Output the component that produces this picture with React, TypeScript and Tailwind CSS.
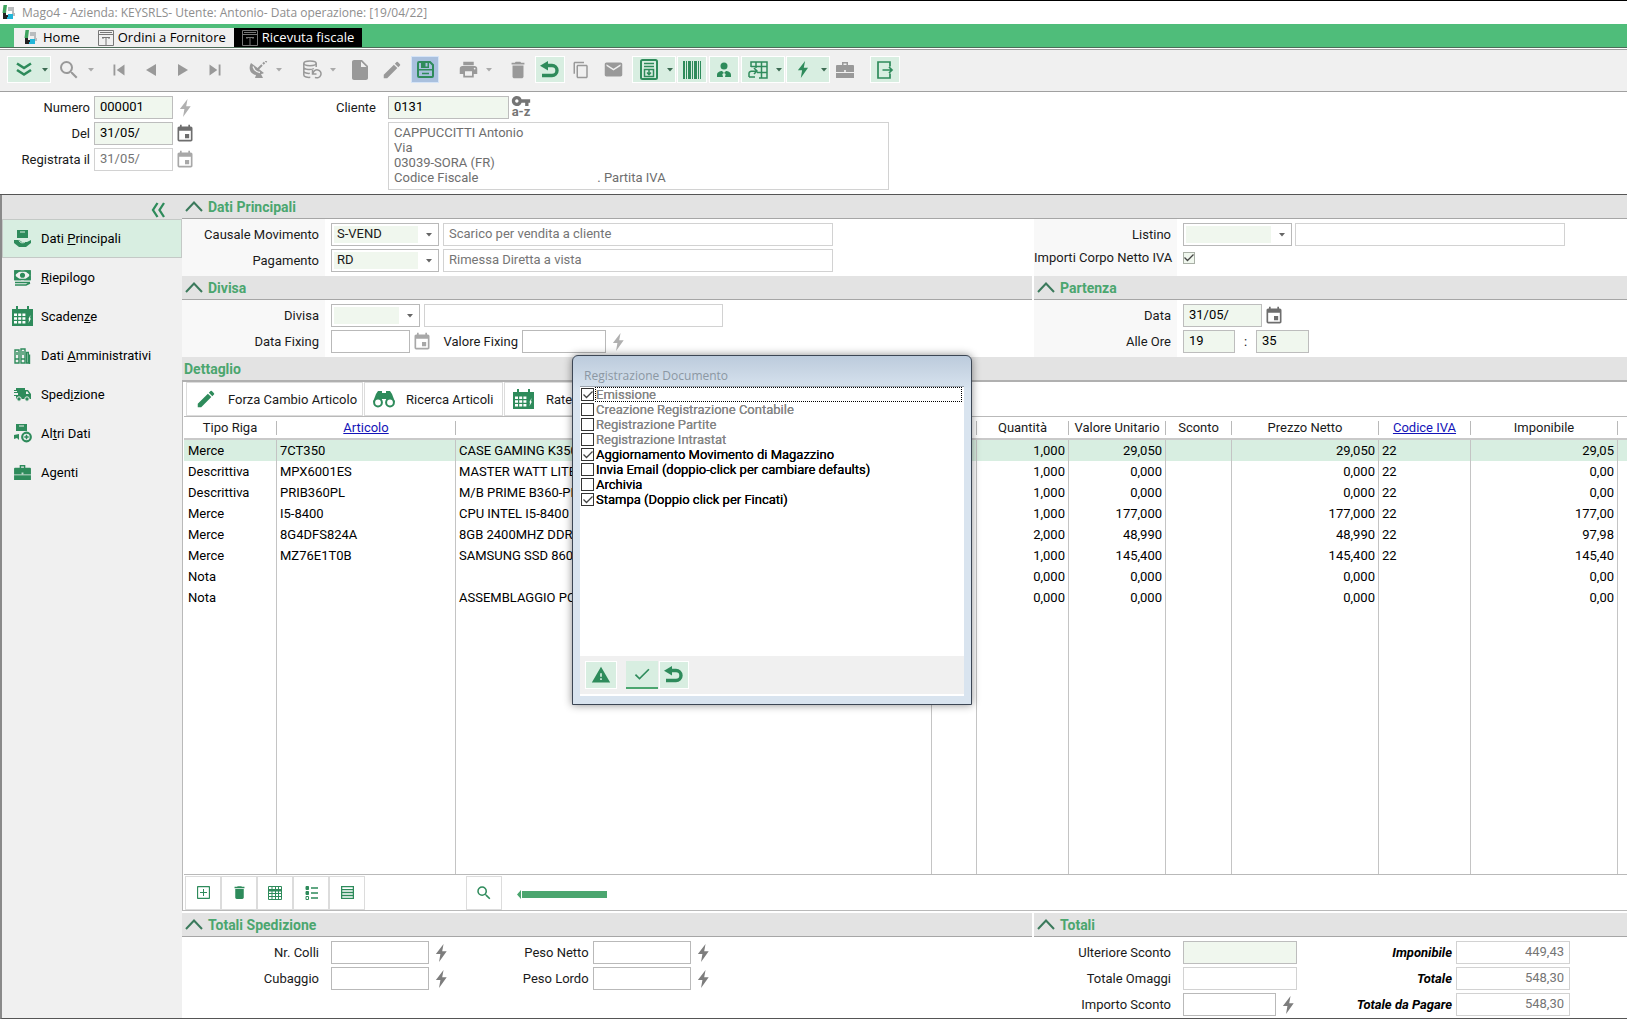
import React from 'react';
import {
  MdSearch, MdSkipPrevious, MdSkipNext, MdInsertDriveFile, MdEdit, MdPrint,
  MdDelete, MdContentCopy, MdEmail, MdEvent, MdVpnKey, MdWarning, MdCheck,
} from 'react-icons/md';

const Caret = ({ className = 'text-[#666]' }: { className?: string }) => (
  <svg width="6" height="4" viewBox="0 0 6 4" className={className}><path d="M0 0h6L3 3.5z" fill="currentColor" /></svg>
);

const Bolt = ({ className = 'text-[#7d7d7d]', size = 18 }: { className?: string; size?: number }) => (
  <svg width={size * 0.7} height={size} viewBox="0 0 14 20" className={`shrink-0 ${className}`}>
    <path d="M9.500 0 1 11h5L4.500 20l8.500-12H8z" fill="currentColor" />
  </svg>
);

const Undo = () => (
  <svg width="20" height="18" viewBox="0 0 20 18">
    <path d="M5 4.5h7a5 5 0 0 1 0 10H2" fill="none" stroke="currentColor" strokeWidth="3.4" />
    <path d="M8 0v9.5L0 4.7z" fill="currentColor" />
  </svg>
);

const DoubleDown = () => (
  <svg width="16" height="15" viewBox="0 0 16 15" fill="none" stroke="currentColor" strokeWidth="2.600">
    <path d="m1 1.500 7 4.500 7-4.500M1 8l7 4.500L15 8" />
  </svg>
);

const DoubleLeft = () => (
  <svg width="14" height="16" viewBox="0 0 14 16" fill="none" stroke="currentColor" strokeWidth="2.300">
    <path d="M6.500 1 2 8l4.500 7M13 1 8.500 8l4.500 7" />
  </svg>
);

const Save = () => (
  <svg width="17" height="17" viewBox="0 0 17 17">
    <path d="M2 1h11l3 3v11a1 1 0 0 1-1 1H2a1 1 0 0 1-1-1V2a1 1 0 0 1 1-1z" fill="#a9c0de" stroke="currentColor" strokeWidth="2" />
    <path d="M4 1h8v6H4zM1 8h15v1.500H1z" fill="currentColor" />
    <path d="M8.500 2h2v3.500h-2z" fill="#a9c0de" />
    <path d="M5 12.500h7" stroke="currentColor" strokeWidth="1.500" />
  </svg>
);

const Dish = () => (
  <svg width="19" height="18" viewBox="0 0 19 18">
    <path d="M2 2c-3 5-1 11 5 12l-1 3h8l-2-4c1 0 2-.5 3-1z" fill="currentColor" />
    <path d="M4 5.500C5 9 7 11 11 11.500" fill="none" stroke="#f0f0f0" strokeWidth="1.300" />
    <path d="m8 9 5-5M14 3l1.500-1.500M16.500 1l1-1" stroke="currentColor" strokeWidth="2" />
  </svg>
);

const Database = () => (
  <svg width="20" height="19" viewBox="0 0 20 19" fill="none" stroke="currentColor" strokeWidth="1.500">
    <ellipse cx="8" cy="3.300" rx="6.200" ry="2.400" />
    <path d="M1.800 3.300V7c0 3 8 3 10 1.500M14.200 3.300V7M1.800 7v4c0 2 4 2.600 6 2.300M1.800 11v4c0 2 4 2.600 6.500 2.300" />
    <path d="M10.500 10v4h4M11 13.500a4 4 0 1 1 2 3.800" />
  </svg>
);

const DocDown = () => (
  <svg width="18" height="21" viewBox="0 0 18 21" fill="none" stroke="currentColor" strokeWidth="2">
    <rect x="1" y="1" width="16" height="19" rx="1.500" />
    <path d="M4 4.500h10M4 7.500h10" strokeWidth="1.500" />
    <rect x="4.500" y="10.500" width="9" height="7" strokeWidth="1.500" />
    <path d="M9 11v3.500M7 13.500l2 2.200 2-2.200" strokeWidth="1.500" />
  </svg>
);

const Barcode = () => (
  <svg width="18" height="18" viewBox="0 0 18 18" fill="currentColor">
    <path d="M0 0h2v18H0zM3 0h1v18H3zM5 0h3v18H5zM9 0h1v18H9zM11 0h3v18h-3zM15 0h1v18h-1zM17 0h1v18h-1z" />
  </svg>
);

const Person = () => (
  <svg width="16" height="16" viewBox="0 0 16 16" fill="currentColor">
    <circle cx="8" cy="4" r="3.500" />
    <path d="M1 15v-2c0-3 3-4 5-4l2 2 2-2c2 0 5 1 5 4v2H9l.7-3L8 11l-1.700 1 .7 3z" />
  </svg>
);

const GridFlow = () => (
  <svg width="20" height="18" viewBox="0 0 20 18" fill="none" stroke="currentColor" strokeWidth="1.500">
    <path d="M3 6V1h16v16h-8M3 5.500h16M8 1v6M13.500 1v16M9 11.500h10" />
    <path d="M1 16v-4c0-2 3-2 7-2M6 7l3 3-3 3M1 16h6" />
  </svg>
);

const Briefcase = ({ size = 18 }: { size?: number }) => (
  <svg width={size} height={size - 2} viewBox="0 0 18 16" fill="currentColor">
    <path d="M6 3V0h6v3h5a1 1 0 0 1 1 1v6H0V4a1 1 0 0 1 1-1zM7.500 3h3V1.500h-3zM0 11h18v5H0z" fillRule="evenodd" />
    <path d="M8 8h2v2H8z" fill="#fff" opacity=".7" />
  </svg>
);

const Exit = () => (
  <svg width="18" height="18" viewBox="0 0 18 18" fill="none" stroke="currentColor" strokeWidth="1.700">
    <path d="M14 5.500V1H2v16h12v-4.500M6.500 9H16M13 6l3 3-3 3" />
  </svg>
);

const Schedule = ({ size = 21 }: { size?: number }) => (
  <svg width={size} height={size} viewBox="0 0 21 21">
    <path d="M0 3h4V0h2v3h9V0h2v3h4v17H0z" fill="currentColor" />
    <path d="M2 7.500h3V10H2zM6.200 7.500h3V10h-3zM10.400 7.500h3V10h-3zM2 11.200h3v2.500H2zM6.200 11.200h3v2.500h-3zM10.400 11.200h3v2.500h-3zM2 15h3v2.500H2zM6.200 15h3v2.500h-3zM10.400 15h3v2.500h-3zM16.500 13l2-4-.5 3.500h1L16.500 17l.5-3z" fill="#fff" />
  </svg>
);

const Binoculars = () => (
  <svg width="22" height="17" viewBox="0 0 22 17">
    <path d="M3 3 5 0h4v2h4V0h4l2 3 3 8h-8l-1-3h-4l-1 3H0z" fill="currentColor" />
    <circle cx="5" cy="11.500" r="3.900" fill="#fff" stroke="currentColor" strokeWidth="2" />
    <circle cx="17" cy="11.500" r="3.900" fill="#fff" stroke="currentColor" strokeWidth="2" />
  </svg>
);

const BoxHand = () => (
  <svg width="17" height="18" viewBox="0 0 17 18" fill="currentColor">
    <path d="M3 0h11v8H3zM0 10h5l3 2h5l4-2v3l-5 4H5l-5-4z" />
    <path d="M6 1.500h5v1H6z" fill="#d8eee1" />
    <path d="M5 10.500c1 2.500 4 3 6 1.500" fill="none" stroke="#d8eee1" />
  </svg>
);

const BoxPlus = () => (
  <svg width="19" height="19" viewBox="0 0 19 19">
    <path d="M3 0h11v7H3zM1 11l5-1v6l-2-2-3 1z" fill="currentColor" />
    <path d="M6 1.500h5v1H6z" fill="#f0f0f0" />
    <circle cx="13.500" cy="13" r="4.300" fill="#f0f0f0" stroke="currentColor" strokeWidth="2.200" />
    <path d="M13.500 10.800v4.400M11.300 13h4.400" stroke="currentColor" strokeWidth="1.500" />
  </svg>
);

const Money = () => (
  <svg width="17" height="16" viewBox="0 0 17 16" fill="none" stroke="currentColor" strokeWidth="1.500">
    <rect x="1" y="1" width="15" height="8.500" />
    <path d="M1 1h4L1 4zM16 1h-4l4 3zM1 9.500h4l-4-3zM16 9.500h-4l4-3z" fill="currentColor" />
    <circle cx="8.500" cy="5.200" r="1.800" fill="currentColor" />
    <path d="M1 12.500h15M1 15h11l4-2" />
  </svg>
);

const Binders = () => (
  <svg width="17" height="16" viewBox="0 0 17 16" fill="none" stroke="currentColor" strokeWidth="1.400">
    <path d="M1 2h4v13H1zM7 1h4v14H7zM1 11h4M7 11h4M3 4v3M9 3v4" />
    <path d="M12.500 4.500h1.800V15h-1.800zM15.500 6.500V16" />
  </svg>
);

const Truck = () => (
  <svg width="17" height="15" viewBox="0 0 17 15" fill="currentColor">
    <path d="M2 1h9v2h3l3 4v5H2V9H0V8h4V6H0V5h3V4H0V3h2z" />
    <path d="M12 4.500h1.500L15 7h-3z" fill="#f0f0f0" />
    <circle cx="5" cy="12" r="2.200" stroke="#f0f0f0" />
    <circle cx="13" cy="12" r="2.200" stroke="#f0f0f0" />
  </svg>
);

const Logo = () => (
  <svg width="13" height="15" viewBox="0 0 13 15">
    <path d="M1.500 0H5L4 8H.5z" fill="#3da35d" />
    <path d="M6 2h6v6h1v3h-3V6H6z" fill="#b9bcbe" />
    <path d="M1 8h3v2h3v4H1z" fill="#222" />
    <path d="M6 9h5v5H5v-2h1z" fill="#22b5d8" />
  </svg>
);

const FormIcon = ({ className }: { className: string }) => (
  <svg width="16" height="16" viewBox="0 0 16 16" fill="none" stroke="currentColor" className={className}>
    <path d="M.5.500h15v15H.5zM.5 4.500h15M2 2.500h12M4 7.500h8M8 7.500V15M5 9v-1.500M11 9v-1.500" />
  </svg>
);

const Collapse = () => (
  <svg width="18" height="11" viewBox="0 0 18 11" className="text-[#3b7a5c]">
    <path d="M1 10 9 1.500 17 10" fill="none" stroke="currentColor" strokeWidth="2" />
  </svg>
);

const NavTriangle = ({ flip = false }: { flip?: boolean }) => (
  <svg width="10" height="12" viewBox="0 0 10 12" fill="currentColor">
    <path d={flip ? 'M0 0v12l10-6z' : 'M10 0v12L0 6z'} />
  </svg>
);

const toolbar = [
  { name: 'Espandi', icon: <DoubleDown />, box: 'w-[44px]', on: true, caret: true },
  { name: 'Cerca', icon: <MdSearch size={24} />, box: 'w-[46px]', caret: true },
  { name: 'Primo', icon: <MdSkipPrevious size={22} />, box: 'w-8 ml-1.5' },
  { name: 'Precedente', icon: <NavTriangle />, box: 'w-8' },
  { name: 'Successivo', icon: <NavTriangle flip />, box: 'w-8' },
  { name: 'Ultimo', icon: <MdSkipNext size={22} />, box: 'w-8' },
  { name: 'Radar', icon: <Dish />, box: 'w-[44px] ml-2.5', caret: true },
  { name: 'Query', icon: <Database />, box: 'w-[44px] ml-2.5', caret: true },
  { name: 'Nuovo', icon: <MdInsertDriveFile size={24} />, box: 'w-[30px] ml-1.5' },
  { name: 'Modifica', icon: <MdEdit size={22} />, box: 'w-[30px] ml-0.5' },
  { name: 'Salva', icon: <Save />, box: 'w-7 ml-1', save: true },
  { name: 'Stampa', icon: <MdPrint size={21} />, box: 'w-[44px] ml-3', caret: true },
  { name: 'Elimina', icon: <MdDelete size={22} />, box: 'w-[30px] ml-2' },
  { name: 'Annulla', icon: <Undo />, box: 'w-[30px] ml-0.5', on: true },
  { name: 'Copia', icon: <MdContentCopy size={18} />, box: 'w-[30px] ml-px' },
  { name: 'Email', icon: <MdEmail size={21} />, box: 'w-[30px] ml-0.5' },
  { name: 'Scarica', icon: <DocDown />, box: 'w-[44px] ml-1', on: true, caret: true },
  { name: 'Codice a barre', icon: <Barcode />, box: 'w-[30px] ml-px', on: true },
  { name: 'Cliente', icon: <Person />, box: 'w-[30px] ml-0.5', on: true },
  { name: 'Griglia', icon: <GridFlow />, box: 'w-[44px] ml-0.5', on: true, caret: true },
  { name: 'Azioni', icon: <Bolt className="" size={17} />, box: 'w-[44px] ml-px', on: true, caret: true },
  { name: 'Agente', icon: <Briefcase />, box: 'w-[30px]' },
  { name: 'Esci', icon: <Exit />, box: 'w-[30px] ml-2.5', on: true },
];

const sideItems = [
  { label: <>Dati <u>P</u>rincipali</>, icon: <BoxHand />, active: true },
  { label: <><u>R</u>iepilogo</>, icon: <Money /> },
  { label: <>Scaden<u>z</u>e</>, icon: <Schedule /> },
  { label: <>Dati <u>A</u>mministrativi</>, icon: <Binders /> },
  { label: <>Sped<u>i</u>zione</>, icon: <Truck /> },
  { label: <>Al<u>t</u>ri Dati</>, icon: <BoxPlus /> },
  { label: <>A<u>g</u>enti</>, icon: <Briefcase size={17} /> },
];

const rows = [
  ['Merce', '7CT350', 'CASE GAMING K350', '', '1,000', '29,050', '', '29,050', '22', '29,05'],
  ['Descrittiva', 'MPX6001ES', 'MASTER WATT LITE', '', '1,000', '0,000', '', '0,000', '22', '0,00'],
  ['Descrittiva', 'PRIB360PL', 'M/B PRIME B360-PLUS', '', '1,000', '0,000', '', '0,000', '22', '0,00'],
  ['Merce', 'I5-8400', 'CPU INTEL I5-8400 2', '', '1,000', '177,000', '', '177,000', '22', '177,00'],
  ['Merce', '8G4DFS824A', '8GB 2400MHZ DDR4', '', '2,000', '48,990', '', '48,990', '22', '97,98'],
  ['Merce', 'MZ76E1T0B', 'SAMSUNG SSD 860', '', '1,000', '145,400', '', '145,400', '22', '145,40'],
  ['Nota', '', '', '', '0,000', '0,000', '', '0,000', '', '0,00'],
  ['Nota', '', 'ASSEMBLAGGIO PC', '', '0,000', '0,000', '', '0,000', '', '0,00'],
];

const headers = ['Tipo Riga', 'Articolo', '', '', 'Quantità', 'Valore Unitario', 'Sconto', 'Prezzo Netto', 'Codice IVA', 'Imponibile'];
const colWidths = ['w-[93px]', 'w-[179px]', '', 'w-[45px]', 'w-[92px]', 'w-[97px]', 'w-[66px]', 'w-[147px]', 'w-[92px]', 'w-[147px]', 'w-[9px]'];

const options = [
  { label: 'Emissione', checked: true, off: true, focus: true },
  { label: 'Creazione Registrazione Contabile', off: true },
  { label: 'Registrazione Partite', off: true },
  { label: 'Registrazione Intrastat', off: true },
  { label: 'Aggiornamento Movimento di Magazzino', checked: true },
  { label: 'Invia Email (doppio-click per cambiare defaults)' },
  { label: 'Archivia' },
  { label: 'Stampa (Doppio click per Fincati)', checked: true },
];

type BoxProps = { id: string; value?: string; kind?: 'edit' | 'plain' | 'read'; className: string; label?: string };

const boxKinds = {
  edit: 'bg-[#f0f7ee] border-[#bdbdbd] text-black',
  plain: 'bg-white border-[#b9b9b9] text-black',
  read: 'bg-white border-[#d2d2d2] text-[#757575]',
};

const Box = ({ id, value = '', kind = 'edit', className, label }: BoxProps) => (
  <input
    id={id}
    aria-label={label}
    defaultValue={value}
    readOnly={kind === 'read'}
    className={`h-[23px] border px-[5px] pb-0.5 outline-none ${boxKinds[kind]} ${className}`}
  />
);

const Combo = ({ id, value = '', className }: { id: string; value?: string; className: string }) => (
  <span className={`flex h-[23px] items-center border border-[#b9b9b9] bg-white p-0.5 ${className}`}>
    <select id={id} defaultValue={value} className="h-full min-w-0 flex-1 appearance-none bg-[#f0f7ee] pb-0.5 pl-[3px] outline-none">
      <option value={value}>{value}</option>
    </select>
    <span className="flex w-[18px] justify-end pr-1"><Caret /></span>
  </span>
);

const Label = ({ id, children, className = '' }: { id: string; children: React.ReactNode; className?: string }) => (
  <label htmlFor={id} className={`shrink-0 whitespace-nowrap text-right ${className}`}>{children}</label>
);

const SectionHead = ({ title }: { title: string }) => (
  <div className="flex h-6 items-center gap-[5px] border-b border-[#a6a6a6] bg-[#e3e3e3] pl-[3px]">
    <Collapse />
    <h2 className="text-sm font-bold leading-4 text-[#4ba66f]">{title}</h2>
  </div>
);

const Row = ({ children }: { children: React.ReactNode }) => <div className="flex h-[23px] items-center">{children}</div>;

const Check = ({ id, checked = false, off = false, box }: { id: string; checked?: boolean; off?: boolean; box: string }) => (
  <span className="grid shrink-0 place-items-center">
    <input
      id={id}
      type="checkbox"
      defaultChecked={checked}
      disabled={off}
      className={`peer col-start-1 row-start-1 appearance-none border ${box}`}
    />
    <svg viewBox="0 0 10 8" className="pointer-events-none col-start-1 row-start-1 hidden h-2 w-2.5 peer-checked:block">
      <path d="M.5 3.500 3.500 6.500 9.500.5" fill="none" stroke="#444" strokeWidth="1.300" />
    </svg>
  </span>
);

const GridTool = ({ name, children, className = '' }: { name: string; children: React.ReactNode; className?: string }) => (
  <button aria-label={name} className={`flex h-[34px] w-9 items-center justify-center border border-[#dcdcdc] text-[#2e8b5b] ${className}`}>
    {children}
  </button>
);

const SaveDialog = () => (
  <div
    role="dialog"
    aria-labelledby="dlg-title"
    className="absolute left-[572px] top-[354px] flex h-[350px] w-[400px] flex-col rounded-t-md border border-[#3c4654] bg-[#d9e4ef] bg-gradient-to-b from-[#bccbdc] to-[#d9e4ef] to-10% px-[7px] pb-2 shadow-[0_0_9px_rgba(0,0,0,0.45)]"
  >
    <h2 id="dlg-title" className="h-[30px] pl-1 pt-3 font-['Open_Sans',sans-serif] text-xs leading-4 text-[#8b97a3]">
      Registrazione Documento
    </h2>
    <ul className="flex-1 border-t border-[#9aa3ad] bg-white">
      {options.map((o, i) => (
        <li key={i} className="flex h-[15px] items-center gap-px pl-px">
          <Check id={`opt${i}`} checked={o.checked} off={o.off} box="h-[13px] w-[13px] border-[#333] bg-white" />
          <label
            htmlFor={`opt${i}`}
            className={`mr-0.5 flex-1 border border-dotted leading-[13px] [text-shadow:0_0_0_currentColor] ${o.off ? 'text-[#858585]' : 'text-black'} ${o.focus ? 'border-black' : 'border-transparent'}`}
          >
            {o.label}
          </label>
        </li>
      ))}
    </ul>
    <div className="flex h-10 items-center border-b-2 border-white bg-[#f0f0f0] pl-[5px] text-[#2e8b5b]">
      <button aria-label="Avvisi" className="flex h-7 w-8 items-center justify-center border border-white bg-[#d8eee1]"><MdWarning size={20} /></button>
      <button aria-label="Conferma" className="ml-[9px] flex h-7 w-8 items-center justify-center border-b-2 border-[#4ba66f] bg-[#d8eee1]"><MdCheck size={20} stroke="currentColor" /></button>
      <button aria-label="Annulla" className="ml-px flex h-7 w-[30px] items-center justify-center border border-white bg-[#d8eee1]"><Undo /></button>
    </div>
  </div>
);

const App = () => (
  <div className="relative flex min-h-screen flex-col border-t border-black bg-white pb-px font-[Roboto,sans-serif] text-[13px] leading-[15px] text-[#1a1a1a]">
    {/* Title bar */}
    <header className="flex h-[23px] items-center gap-[7px] pl-0.5">
      <Logo />
      <h1 className="font-['Open_Sans',sans-serif] text-xs text-[#8e8e8e]">
        Mago4 - Azienda: KEYSRLS- Utente: Antonio- Data operazione: [19/04/22]
      </h1>
    </header>

    {/* Document tabs */}
    <nav className="flex h-6 items-end border-b border-[#4c6b58] bg-[#4fbd7a] pl-3.5 font-['Open_Sans',sans-serif] text-[13px] text-black">
      <button className="flex h-[19px] items-center gap-1.5 bg-[#f0f0f0] px-2.5"><Logo />Home</button>
      <button className="flex h-[19px] items-center gap-1 bg-[#f0f0f0] px-2"><FormIcon className="text-[#777]" />Ordini a Fornitore</button>
      <button className="flex h-[19px] items-center gap-1 bg-black px-2 text-white"><FormIcon className="text-[#777]" />Ricevuta fiscale</button>
    </nav>

    {/* Toolbar */}
    <div className="mt-px flex h-[43px] items-center border-y border-[#a0a0a0] bg-[#f0f0f0] pb-0.5 pl-[7px]">
      {toolbar.map((t) => (
        <button
          key={t.name}
          aria-label={t.name}
          className={`flex h-[27px] shrink-0 items-center border ${t.box} ${
            t.save ? 'border-[#d5e4f7] bg-[#a9c0de] text-[#2e8b5b]'
              : t.on ? 'border-white bg-[#d8eee1] text-[#2e8b5b]'
              : 'border-transparent text-[#999]'
          }`}
        >
          <span className="flex flex-1 justify-center">{t.icon}</span>
          {t.caret && <span className="flex w-2.5 justify-center"><Caret className={t.on ? 'text-[#3b6b52]' : 'text-[#aaa]'} /></span>}
        </button>
      ))}
    </div>

    {/* Document header */}
    <div className="flex gap-[115px] border-b border-[#555] pb-1 pt-1">
      <div className="flex flex-col gap-[3px]">
        <Row>
          <Label id="numero" className="w-[90px]">Numero</Label>
          <Box id="numero" value="000001" className="ml-1 w-[79px]" />
          <Bolt className="ml-1.5 text-[#b0b0b0]" />
        </Row>
        <Row>
          <Label id="del" className="w-[90px]">Del</Label>
          <Box id="del" value="31/05/" className="ml-1 w-[79px]" />
          <MdEvent size={20} className="ml-0.5 text-[#6e6e6e]" />
        </Row>
        <Row>
          <Label id="registrata" className="w-[90px]">Registrata il</Label>
          <Box id="registrata" value="31/05/" kind="read" className="ml-1 w-[79px]" />
          <MdEvent size={20} className="ml-0.5 text-[#a8a8a8]" />
        </Row>
      </div>
      <div className="flex flex-col gap-[3px] pl-1.5">
        <Row>
          <Label id="cliente" className="w-[60px]">Cliente</Label>
          <Box id="cliente" value="0131" className="ml-3 w-[121px]" />
          <button aria-label="Ricerca per chiave" className="ml-0.5 flex flex-col items-center pb-1 text-[13px] font-bold leading-[9px] text-[#757575]">
            <MdVpnKey size={20} className="-my-1" />a-z
          </button>
        </Row>
        <div className="ml-[72px] h-[68px] w-[501px] border border-[#d2d2d2] px-[5px] pt-0.5 text-[#6e6e6e]">
          <p>CAPPUCCITTI Antonio</p>
          <p>Via</p>
          <p>03039-SORA (FR)</p>
          <p className="flex gap-[119px]"><span>Codice Fiscale</span><span>. Partita IVA</span></p>
        </div>
      </div>
    </div>

    <div className="flex flex-1 border-b border-l-2 border-b-[#555] border-l-[#8a8a8a]">
      {/* Side menu */}
      <aside className="w-[180px] shrink-0 bg-[#f0f0f0]">
        <div className="flex h-6 items-center justify-end bg-[#e3e3e3] pr-[17px] pt-1.5 text-[#2e8b5b]">
          <button aria-label="Comprimi menu"><DoubleLeft /></button>
        </div>
        {sideItems.map((s, i) => (
          <button
            key={i}
            className={`flex h-[39px] w-full items-center border pl-[7px] text-black ${s.active ? 'border-[#c4c9c6] bg-[#d8eee1]' : 'border-transparent'}`}
          >
            <span className="flex w-6 justify-center text-[#2e8b5b]">{s.icon}</span>
            <span className="ml-[7px]">{s.label}</span>
          </button>
        ))}
      </aside>

      <main className="flex min-w-0 flex-1 flex-col">
        <SectionHead title="Dati Principali" />
        <div className="grid h-[57px] grid-cols-[850fr_593fr] gap-0.5">
          <div className="flex flex-col gap-[3px] bg-[linear-gradient(90deg,#f8f8f8_143px,#fff_143px)] pt-1">
            <Row>
              <Label id="causale" className="w-[137px]">Causale Movimento</Label>
              <Combo id="causale" value="S-VEND" className="ml-3 w-[108px]" />
              <Box id="causale-d" label="Descrizione causale" value="Scarico per vendita a cliente" kind="read" className="ml-1 w-[390px]" />
            </Row>
            <Row>
              <Label id="pagamento" className="w-[137px]">Pagamento</Label>
              <Combo id="pagamento" value="RD" className="ml-3 w-[108px]" />
              <Box id="pagamento-d" label="Descrizione pagamento" value="Rimessa Diretta a vista" kind="read" className="ml-1 w-[390px]" />
            </Row>
          </div>
          <div className="flex flex-col bg-[linear-gradient(90deg,#f8f8f8_143px,#fff_143px)] pt-1">
            <Row>
              <Label id="listino" className="w-[137px]">Listino</Label>
              <Combo id="listino" className="ml-3 w-[109px]" />
              <Box id="listino-d" label="Descrizione listino" kind="read" className="ml-[3px] w-[270px]" />
            </Row>
            <Row>
              <Label id="netto" className="w-[137px]">Importi Corpo Netto IVA</Label>
              <span className="ml-3"><Check id="netto" checked box="h-3 w-3 border-[#a9b0a6] bg-[#f0f7ee]" /></span>
            </Row>
          </div>
        </div>

        <div className="grid grid-cols-[850fr_593fr] gap-0.5">
          <section>
            <SectionHead title="Divisa" />
            <div className="flex h-[57px] flex-col gap-[3px] bg-[linear-gradient(90deg,#f8f8f8_143px,#fff_143px)] pt-1">
              <Row>
                <Label id="divisa" className="w-[137px]">Divisa</Label>
                <Combo id="divisa" className="ml-3 w-[89px]" />
                <Box id="divisa-d" label="Descrizione divisa" kind="read" className="ml-1 w-[299px]" />
              </Row>
              <Row>
                <Label id="fixing" className="w-[137px]">Data Fixing</Label>
                <Box id="fixing" kind="plain" className="ml-3 w-[79px]" />
                <MdEvent size={20} className="ml-0.5 text-[#a8a8a8]" />
                <Label id="valfixing" className="w-[86px]">Valore Fixing</Label>
                <Box id="valfixing" kind="plain" className="ml-1 w-[84px]" />
                <Bolt className="ml-1.5 text-[#b0b0b0]" />
              </Row>
            </div>
          </section>
          <section>
            <SectionHead title="Partenza" />
            <div className="flex h-[57px] flex-col gap-[3px] bg-[linear-gradient(90deg,#f8f8f8_143px,#fff_143px)] pt-1">
              <Row>
                <Label id="data" className="w-[137px]">Data</Label>
                <Box id="data" value="31/05/" className="ml-3 w-[79px]" />
                <MdEvent size={20} className="ml-0.5 text-[#6e6e6e]" />
              </Row>
              <Row>
                <Label id="ore" className="w-[137px]">Alle Ore</Label>
                <Box id="ore" value="19" className="ml-3 w-[52px]" />
                <span className="w-[21px] text-center">:</span>
                <Box id="minuti" label="Minuti" value="35" className="w-[53px]" />
              </Row>
            </div>
          </section>
        </div>

        {/* Document lines */}
        <h2 className="h-[25px] border-b-2 border-[#b0b0b0] bg-[#e3e3e3] pl-0.5 pt-1 text-sm font-bold leading-4 text-[#4ba66f]">Dettaglio</h2>
        <div className="flex flex-1 flex-col border-b border-l border-[#b9b9b9] pl-px">
          <div className="flex h-[35px] items-end gap-px border-b border-[#b9b9b9] pl-0.5">
            <button className="flex h-[34px] w-[177px] items-center border border-[#dcdcdc] pl-2"><MdEdit size={22} className="text-[#2e8b5b]" /><span className="ml-[11px]">Forza Cambio Articolo</span></button>
            <button className="flex h-[34px] w-[139px] items-center border border-[#dcdcdc] pl-2"><span className="text-[#2e8b5b]"><Binoculars /></span><span className="ml-[11px]">Ricerca Articoli</span></button>
            <button className="flex h-[34px] w-[139px] items-center border border-[#dcdcdc] pl-2"><span className="text-[#2e8b5b]"><Schedule /></span><span className="ml-3">Rate</span></button>
          </div>
          <table className="w-full table-fixed border-separate border-spacing-0">
            <colgroup>{colWidths.map((w, i) => <col key={i} className={w} />)}</colgroup>
            <thead>
              <tr className="h-[23px]">
                {headers.map((h, i) => (
                  <th key={i} className="border-b-2 border-[#c9c9c9] p-0 font-normal">
                    <div className="h-3.5 border-r border-[#b9b9b9] leading-[14px]">
                      {i === 1 || i === 8 ? <a href="#" className="text-[#1414b8] underline">{h}</a> : h}
                    </div>
                  </th>
                ))}
                <th className="border-b-2 border-[#c9c9c9]" />
              </tr>
            </thead>
            <tbody>
              {rows.map((r, i) => (
                <tr key={i} className={`h-[21px] text-black ${i === 0 ? 'bg-[#d8eee1]' : ''}`}>
                  {r.map((c, j) => (
                    <td key={j} className={`overflow-hidden whitespace-nowrap border-r border-[#c4c4c4] py-0 ${j > 3 && j !== 8 ? 'px-[3px] text-right' : j === 0 ? 'px-1' : 'px-[3px]'}`}>{c}</td>
                  ))}
                  <td />
                </tr>
              ))}
            </tbody>
          </table>
          <div className="flex flex-1 border-b border-[#b9b9b9]">
            {colWidths.map((w, i) => (
              <div key={i} className={`${w || 'flex-1'} ${i < 10 ? 'border-r border-[#c4c4c4]' : ''}`} />
            ))}
          </div>
          <div className="flex h-[35px] items-center pl-px">
            <GridTool name="Aggiungi riga">
              <svg width="13" height="13" viewBox="0 0 13 13" fill="none" stroke="currentColor"><rect x=".5" y=".5" width="12" height="12" rx="1" strokeWidth="1.300" /><path d="M6.500 3v7M3 6.500h7" /></svg>
            </GridTool>
            <GridTool name="Elimina riga"><MdDelete size={17} /></GridTool>
            <GridTool name="Tabella">
              <svg width="14" height="14" viewBox="0 0 14 14" fill="none" stroke="currentColor"><path d="M.5.500h13v13H.5zM.5 7.500h13M.5 10.500h13M4 1v12M7.500 1v12M10.500 1v12" /><path d="M0 3h14v2.500H0z" fill="currentColor" stroke="none" /></svg>
            </GridTool>
            <GridTool name="Elenco">
              <svg width="13" height="14" viewBox="0 0 13 14" fill="none" stroke="currentColor"><path d="M6 2h7M6 7h7M6 12h7" strokeWidth="1.300" /><path d="M1 .5h2.500v3H1zM1 5.500h2.500v3H1z" fill="currentColor" /><path d="M1 10.500h2.500v3H1z" /></svg>
            </GridTool>
            <GridTool name="Righe">
              <svg width="13" height="13" viewBox="0 0 13 13" fill="none" stroke="currentColor" strokeWidth="1.300"><path d="M.6.600h11.800v11.800H.6zM.6 3.600h12M.6 6.500h12M.6 9.500h12" /></svg>
            </GridTool>
            <GridTool name="Cerca" className="ml-[101px]"><MdSearch size={18} /></GridTool>
            <svg width="90" height="9" viewBox="0 0 90 9" className="ml-[15px] mt-1 text-[#4ba66f]"><path d="M4 0v9L0 4.500zM5 1h85v7H5z" fill="currentColor" /></svg>
          </div>
        </div>

        {/* Totals */}
        <div className="mt-0.5 grid grid-cols-[850fr_593fr] gap-0.5">
          <section>
            <SectionHead title="Totali Spedizione" />
            <div className="flex flex-col gap-[3px] pt-1">
              <Row>
                <Label id="colli" className="w-[137px]">Nr. Colli</Label>
                <Box id="colli" kind="plain" className="ml-3 w-[98px]" />
                <Bolt className="ml-1.5 text-[#7d7d7d]" />
                <Label id="pnetto" className="w-[141px]">Peso Netto</Label>
                <Box id="pnetto" kind="plain" className="ml-1 w-[98px]" />
                <Bolt className="ml-1.5 text-[#7d7d7d]" />
              </Row>
              <Row>
                <Label id="cubaggio" className="w-[137px]">Cubaggio</Label>
                <Box id="cubaggio" kind="plain" className="ml-3 w-[98px]" />
                <Bolt className="ml-1.5 text-[#7d7d7d]" />
                <Label id="plordo" className="w-[141px]">Peso Lordo</Label>
                <Box id="plordo" kind="plain" className="ml-1 w-[98px]" />
                <Bolt className="ml-1.5 text-[#7d7d7d]" />
              </Row>
            </div>
          </section>
          <section>
            <SectionHead title="Totali" />
            <div className="flex gap-[3px] pb-0.5 pt-1">
              <div className="flex w-[267px] flex-col gap-[3px]">
                <Row>
                  <Label id="usconto" className="w-[137px]">Ulteriore Sconto</Label>
                  <Box id="usconto" className="ml-3 w-[114px]" />
                </Row>
                <Row>
                  <Label id="omaggi" className="w-[137px]">Totale Omaggi</Label>
                  <Box id="omaggi" kind="read" className="ml-3 w-[114px]" />
                </Row>
                <Row>
                  <Label id="isconto" className="w-[137px]">Importo Sconto</Label>
                  <Box id="isconto" kind="plain" className="ml-3 w-[93px]" />
                  <Bolt className="ml-1.5 text-[#7d7d7d]" />
                </Row>
              </div>
              <div className="flex flex-col gap-[3px]">
                {[['Imponibile', '449,43'], ['Totale', '548,30'], ['Totale da Pagare', '548,30']].map(([l, v]) => (
                  <Row key={l}>
                    <Label id={l} className="w-[148px] font-bold italic text-black">{l}</Label>
                    <Box id={l} value={v} kind="read" className="ml-1 w-[114px] text-right" />
                  </Row>
                ))}
              </div>
            </div>
          </section>
        </div>
      </main>
    </div>

    <SaveDialog />
  </div>
);

export default App;
